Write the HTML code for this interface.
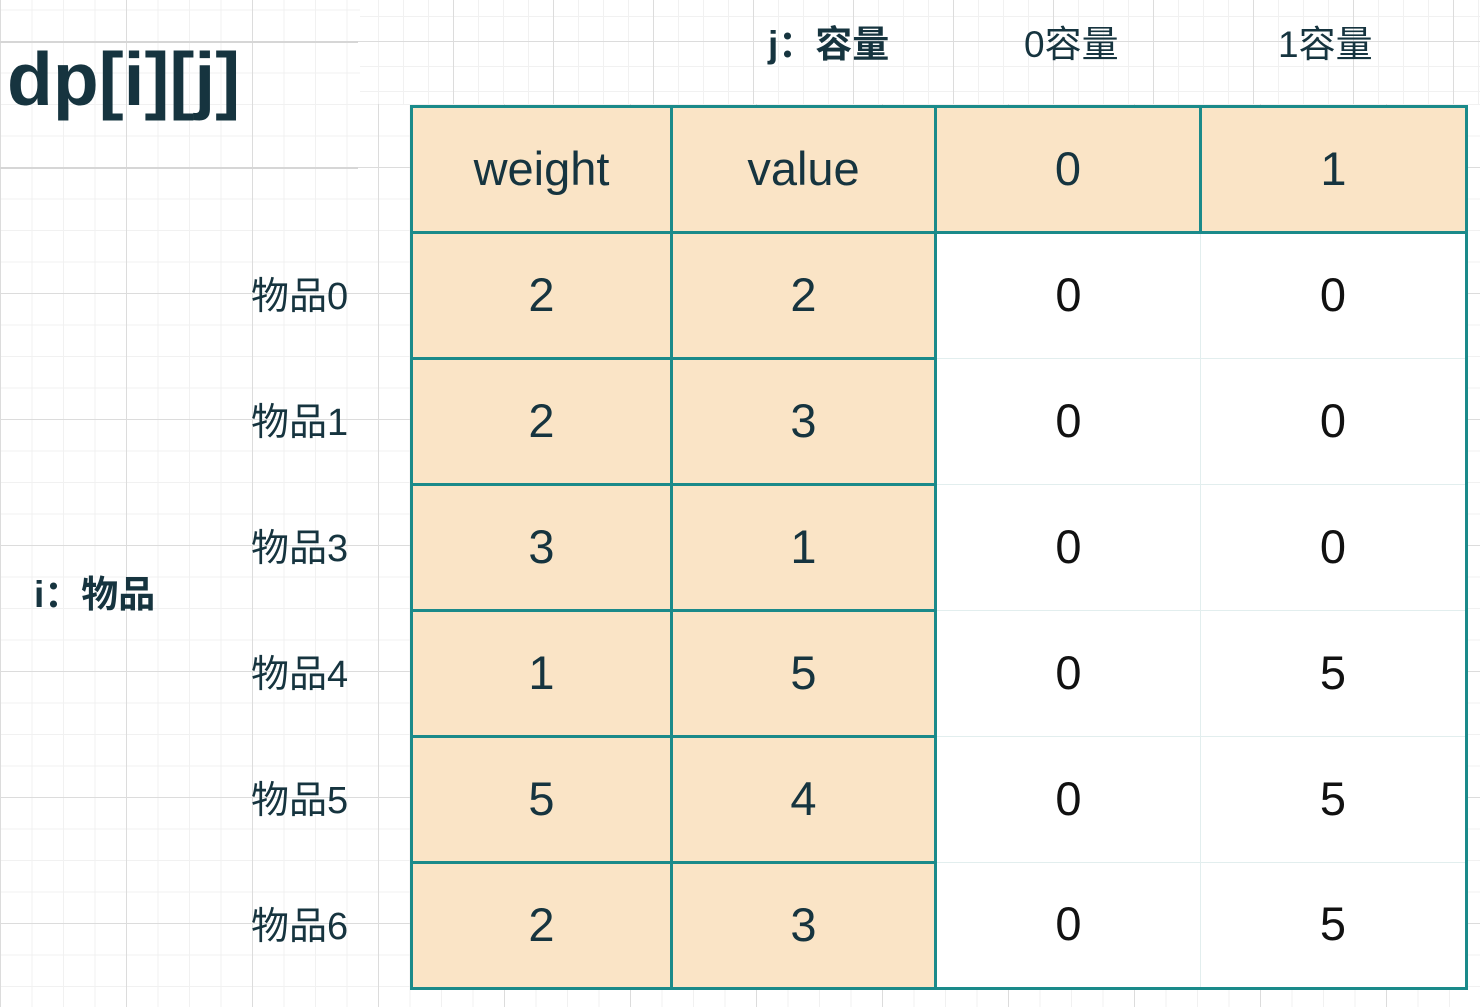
<!DOCTYPE html>
<html><head><meta charset="utf-8"><style>
html,body{margin:0;padding:0}
body{width:1480px;height:1007px;position:relative;overflow:hidden;background:#fff;font-family:"Liberation Sans","Noto Sans CJK SC",sans-serif;color:#16343f}
.grid{position:absolute;left:0;top:0;width:1480px;height:1007px;
background-image:
linear-gradient(90deg,#dcdcdc 1px,transparent 1px),
linear-gradient(0deg,#dcdcdc 1px,transparent 1px),
linear-gradient(90deg,#f1f1f1 1px,transparent 1px),
linear-gradient(0deg,#f1f1f1 1px,transparent 1px);
background-size:126px 126px,126px 126px,31.5px 31.5px,31.5px 31.5px;
background-position:0 0,0 42px,0 0,0 10.5px}
.top{position:absolute;left:360px;top:0;width:1120px;height:104px;background:#fff;
background-image:
linear-gradient(90deg,#dcdcdc 1px,transparent 1px),
linear-gradient(0deg,#dcdcdc 1px,transparent 1px),
linear-gradient(90deg,#f1f1f1 1px,transparent 1px),
linear-gradient(0deg,#f1f1f1 1px,transparent 1px);
background-size:100px 100px,100px 100px,25px 25px,25px 25px;
background-position:-7px 0,0 42px,-7px 0,0 17px}
.hl{position:absolute;left:0;width:358px;height:2px;background:#d6d6d6}
.t{position:absolute;white-space:nowrap}
table{position:absolute;left:410px;top:105px;border-collapse:collapse}
td{height:120px;text-align:center;font-size:47px;padding:0 0 3px 0}
td.p{background:#fae4c6;border:3px solid #1a8a8a;color:#16343f}
td.w{background:#fff;border:1px solid #e2eeee;color:#111}
</style></head><body>
<div class="grid"></div>
<div class="top"></div>
<div class="hl" style="top:41px"></div>
<div class="hl" style="top:167px"></div>
<div class="t" style="left:7px;top:36px;font-size:75px;font-weight:bold">dp[i][j]</div>
<div class="t" style="left:768px;top:14px;font-size:37px;font-weight:bold">j：容量</div>
<div class="t" style="left:1024px;top:14px;font-size:37px">0容量</div>
<div class="t" style="left:1278px;top:14px;font-size:37px">1容量</div>
<div class="t" style="left:34px;top:564px;font-size:37px;font-weight:bold">i：物品</div>
<div class="t" style="left:251px;top:265px;font-size:38px">物品0</div>
<div class="t" style="left:251px;top:391px;font-size:38px">物品1</div>
<div class="t" style="left:251px;top:517px;font-size:38px">物品3</div>
<div class="t" style="left:251px;top:643px;font-size:38px">物品4</div>
<div class="t" style="left:251px;top:769px;font-size:38px">物品5</div>
<div class="t" style="left:251px;top:895px;font-size:38px">物品6</div>
<table>
<tr><td class="p" style="width:257px">weight</td><td class="p" style="width:261px">value</td><td class="p" style="width:262px">0</td><td class="p" style="width:263px">1</td></tr>
<tr><td class="p">2</td><td class="p">2</td><td class="w">0</td><td class="w" style="border-right:3px solid #1a8a8a">0</td></tr>
<tr><td class="p">2</td><td class="p">3</td><td class="w">0</td><td class="w" style="border-right:3px solid #1a8a8a">0</td></tr>
<tr><td class="p">3</td><td class="p">1</td><td class="w">0</td><td class="w" style="border-right:3px solid #1a8a8a">0</td></tr>
<tr><td class="p">1</td><td class="p">5</td><td class="w">0</td><td class="w" style="border-right:3px solid #1a8a8a">5</td></tr>
<tr><td class="p">5</td><td class="p">4</td><td class="w">0</td><td class="w" style="border-right:3px solid #1a8a8a">5</td></tr>
<tr><td class="p">2</td><td class="p">3</td><td class="w" style="border-bottom:3px solid #1a8a8a">0</td><td class="w" style="border-right:3px solid #1a8a8a;border-bottom:3px solid #1a8a8a">5</td></tr>
</table>
</body></html>
